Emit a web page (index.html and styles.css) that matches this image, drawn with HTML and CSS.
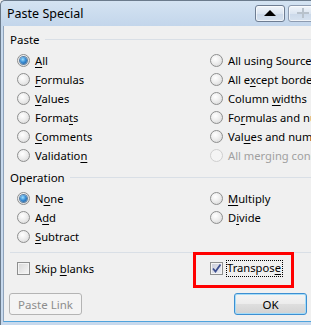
FILE: index.html
```html
<!DOCTYPE html>
<html lang="en">
<head>
  <meta charset="UTF-8" />
  <title>Paste Special</title>
  <link rel="stylesheet" href="styles.css">
</head>
<body>
  <div class="window">
    <div class="titlebar">
      <span class="title">Paste Special</span>
      <div class="caption-btns">
        <span class="cap">
          <svg width="12" height="6" viewBox="0 0 12 6"><polygon points="0,6 6,0 12,6" fill="#000"/></svg>
        </span>
        <span class="cap faded">
          <svg width="14" height="10" viewBox="0 0 14 10"><path d="M1 5h12M7 0v10" stroke="#b8c2cc" stroke-width="2"/></svg>
        </span>
      </div>
    </div>

    <div class="client">
      <div class="group-head"><span>Paste</span><i class="rule"></i></div>
      <div class="options">
        <label class="opt"><span class="radio on"></span><span><u>A</u>ll</span></label>
        <label class="opt"><span class="radio"></span><span>All using Source t<u>h</u>eme</span></label>
        <label class="opt"><span class="radio"></span><span><u>F</u>ormulas</span></label>
        <label class="opt"><span class="radio"></span><span>All e<u>x</u>cept borders</span></label>
        <label class="opt"><span class="radio"></span><span><u>V</u>alues</span></label>
        <label class="opt"><span class="radio"></span><span>Column <u>w</u>idths</span></label>
        <label class="opt"><span class="radio"></span><span>Forma<u>t</u>s</span></label>
        <label class="opt"><span class="radio"></span><span>Fo<u>r</u>mulas and number formats</span></label>
        <label class="opt"><span class="radio"></span><span><u>C</u>omments</span></label>
        <label class="opt"><span class="radio"></span><span>Val<u>u</u>es and number formats</span></label>
        <label class="opt"><span class="radio"></span><span>Validatio<u>n</u></span></label>
        <label class="opt disabled"><span class="radio"></span><span>All merging conditional formats</span></label>
      </div>

      <div class="group-head op"><span>Operation</span><i class="rule"></i></div>
      <div class="options">
        <label class="opt"><span class="radio on"></span><span>N<u>o</u>ne</span></label>
        <label class="opt"><span class="radio"></span><span><u>M</u>ultiply</span></label>
        <label class="opt"><span class="radio"></span><span>A<u>d</u>d</span></label>
        <label class="opt"><span class="radio"></span><span>D<u>i</u>vide</span></label>
        <label class="opt"><span class="radio"></span><span><u>S</u>ubtract</span></label>
        <span></span>
      </div>

      <div class="separator"></div>

      <div class="options checks">
        <label class="opt"><span class="check"></span><span>Skip <u>b</u>lanks</span></label>
        <label class="opt marked">
          <span class="check on">
            <svg width="11" height="11" viewBox="0 0 11 11"><path d="M2 5.5l2.5 3 5-7" fill="none" stroke="#3d4f8f" stroke-width="1.8"/></svg>
          </span>
          <span class="focus">Transpos<u>e</u></span>
        </label>
      </div>

      <div class="buttons">
        <button class="btn" disabled>Paste Link</button>
        <button class="btn default">OK</button>
      </div>
    </div>
  </div>
</body>
</html>
```

FILE: styles.css
```css
* { box-sizing: border-box; }

html, body {
  margin: 0;
  padding: 0;
  width: 311px;
  height: 325px;
  overflow: hidden;
  background: #f0f0f0;
}

body {
  font-family: "Segoe UI", "Noto Sans", "Open Sans", sans-serif;
  font-size: 11.2px;
  color: #000;
}

.window {
  width: 380px;
  height: 325px;
  border-left: 1px solid #6b7b8c;
  border-top: 1px solid #6b7b8c;
  border-top-left-radius: 5px;
  background: #c7d9ed;
  display: flex;
  flex-direction: column;
  padding-left: 2px;
}

.titlebar {
  height: 25px;
  display: flex;
  align-items: center;
  justify-content: space-between;
  background: linear-gradient(to bottom, #d4e3f2, #c3d6eb);
  margin-left: -2px;
  padding-left: 6px;
  border-top-left-radius: 5px;
}

.title {
  font-size: 12.5px;
  color: #000;
  margin-top: -1px;
}

.caption-btns {
  display: flex;
  gap: 3px;
  margin-right: 62px;
  margin-top: -1px;
}

.cap {
  width: 30px;
  height: 17px;
  border: 1px solid #6e7d92;
  border-radius: 3px;
  background: linear-gradient(to bottom, #f1f5fa, #dbe5f1 50%, #cbd9ea 51%, #d6e2ef);
  box-shadow: inset 0 0 0 1px rgba(255,255,255,0.6);
  display: flex;
  align-items: center;
  justify-content: center;
}

.cap.faded {
  border-color: #8d9bb0;
}

.client {
  flex: 1;
  background: #f0f0f0;
  border-left: 1px solid #8fa3bb;
  border-bottom: 1px solid #4fa3dc;
  margin-bottom: 3px;
  padding: 6px 0 0 5px;
  position: relative;
}

.group-head {
  display: flex;
  align-items: center;
  height: 14px;
  padding-left: 1px;
  font-size: 11.5px;
}

.group-head .rule {
  flex: 1;
  height: 1px;
  background: #d9dfe6;
  margin-left: 5px;
}

.group-head.op {
  margin-top: 5px;
}

.options {
  display: grid;
  grid-template-columns: 193px 1fr;
  grid-auto-rows: 19px;
  margin-top: 5px;
  padding-left: 8px;
}

.opt {
  display: flex;
  align-items: center;
  white-space: nowrap;
  position: relative;
}

.opt u {
  text-decoration-thickness: 1px;
  text-underline-offset: 2px;
}

.opt.disabled {
  color: #a0a0a0;
}

.radio {
  width: 13px;
  height: 13px;
  border-radius: 50%;
  border: 1px solid #8e8f8f;
  background: radial-gradient(circle at 40% 35%, #ffffff 0%, #eeeeee 45%, #d2d2d2 100%);
  margin-right: 5px;
  flex: none;
  display: flex;
  align-items: center;
  justify-content: center;
}

.radio.on::after {
  content: "";
  width: 7px;
  height: 7px;
  border-radius: 50%;
  background: radial-gradient(circle at 40% 35%, #9fe0ff 0%, #3b8fd6 45%, #174f8c 100%);
  box-shadow: 0 0 0 1px #5b7fa3;
}

.opt.disabled .radio {
  border-color: #cfcfcf;
  background: #f4f4f4;
}

.separator {
  height: 1px;
  background: #d9dfe6;
  margin: 6px 0 0 1px;
}

.checks {
  margin-top: 6px;
}

.check {
  width: 13px;
  height: 13px;
  border: 1px solid #8e8f8f;
  background: linear-gradient(135deg, #d6d6d6, #f7f7f7);
  box-shadow: inset 0 0 0 1px #f4f4f4;
  margin-right: 5px;
  flex: none;
  display: flex;
  align-items: center;
  justify-content: center;
}

.check.on {
  background: linear-gradient(135deg, #c9cbd6, #eef0f8);
}

.focus {
  outline: 1px dotted #000;
  outline-offset: 0;
  padding: 0 1px 1px 0;
  margin-left: -1px;
  line-height: 14px;
}

.marked::before {
  content: "";
  position: absolute;
  left: -17px;
  top: -7px;
  width: 95px;
  height: 30px;
  border: 3px solid #ff0000;
}

.buttons {
  display: flex;
  justify-content: space-between;
  margin-top: 15px;
  width: 298px;
}

.btn {
  width: 73px;
  height: 22px;
  font-family: inherit;
  font-size: 11.5px;
  border-radius: 3px;
  padding: 0;
}

.btn[disabled] {
  border: 1px solid #b4b4b4;
  background: #f4f4f4;
  color: #8d8d8d;
}

.btn.default {
  border: 1px solid #3c8fd2;
  background: linear-gradient(to bottom, #f4f4f4, #ececec 48%, #dedede 52%, #d2d2d2);
  box-shadow: inset 0 0 0 1px #a6dcf7;
  color: #000;
}
```
